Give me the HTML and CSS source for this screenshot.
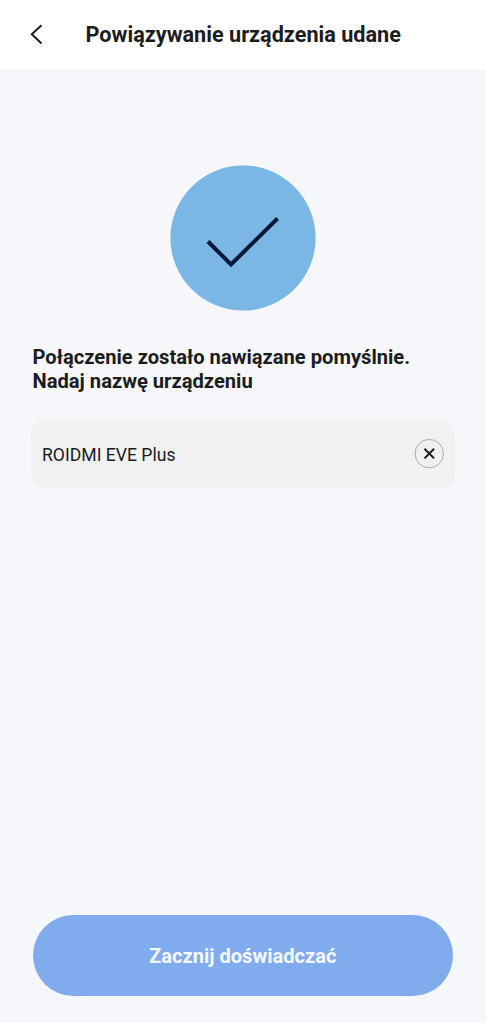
FILE: index.html
```html
<!DOCTYPE html>
<html lang="pl">
<head>
<meta charset="utf-8">
<title>Powiązywanie urządzenia udane</title>
<link rel="stylesheet" href="styles.css">
</head>
<body>
<div class="screen">
<header class="bar">
<svg class="back" width="14" height="22" viewBox="0 0 14 22"><path d="M12.5 2.2 2.8 11.2 12.5 20.4"/></svg>
<h1 class="title">Powiązywanie urządzenia udane</h1>
</header>
<main class="content">
<svg class="success" width="146" height="146" viewBox="0 0 146 146"><circle cx="73" cy="73" r="72.6"/><path d="M38 76.5 61 99.5 107.5 53.5"/></svg>
<p class="message">Połączenie zostało nawiązane pomyślnie.<br>Nadaj nazwę urządzeniu</p>
<div class="field">
<span class="name">ROIDMI EVE Plus</span>
<svg class="clear" width="30" height="30" viewBox="0 0 30 30"><circle cx="15.3" cy="14.6" r="14.2"/><path d="M10.5 9.8 20.1 19.4M20.1 9.8 10.5 19.4"/></svg>
</div>
<button class="start">Zacznij doświadczać</button>
</main>
</div>
</body>
</html>
```
FILE: styles.css
```css
body { margin: 0; font-family: Roboto, sans-serif; color: #1b1c1e; }
.screen { height: 1023px; display: flex; flex-direction: column; background: #f5f7fb; }
.bar { height: 68.5px; box-sizing: border-box; display: flex; align-items: center; padding-left: 29px; background: #fff; }
.back { fill: none; stroke: #1b1c1e; stroke-width: 2; }
.title { margin: 2px 0 0 42.5px; font-size: 21.65px; line-height: 26px; font-weight: 700; white-space: nowrap; }
.content { flex: 1; display: flex; flex-direction: column; padding: 96.5px 33px 27px 32.5px; }
.success { align-self: center; fill: #7ab7e5; }
.success path { fill: none; stroke: #06183a; stroke-width: 4; }
.message { margin: 33.8px 0 0; font-size: 20.15px; line-height: 24px; font-weight: 700; white-space: nowrap; }
.field { margin: 28px -2px 0 -1.5px; height: 67px; box-sizing: border-box; display: flex; align-items: center; justify-content: space-between; padding: 0 11px; border-radius: 13px; background: #f1f1f1; }
.name { margin-top: 1.6px; font-size: 17.6px; }
.clear { fill: none; stroke: #1b1c1e; stroke-width: 2; }
.clear circle { stroke: #aaa; stroke-width: 1; }
.start { margin-top: auto; height: 81px; border: 0; border-radius: 41px; background: #80abed; color: #f5faff; font: 700 20.1px Roboto, sans-serif; }
```
